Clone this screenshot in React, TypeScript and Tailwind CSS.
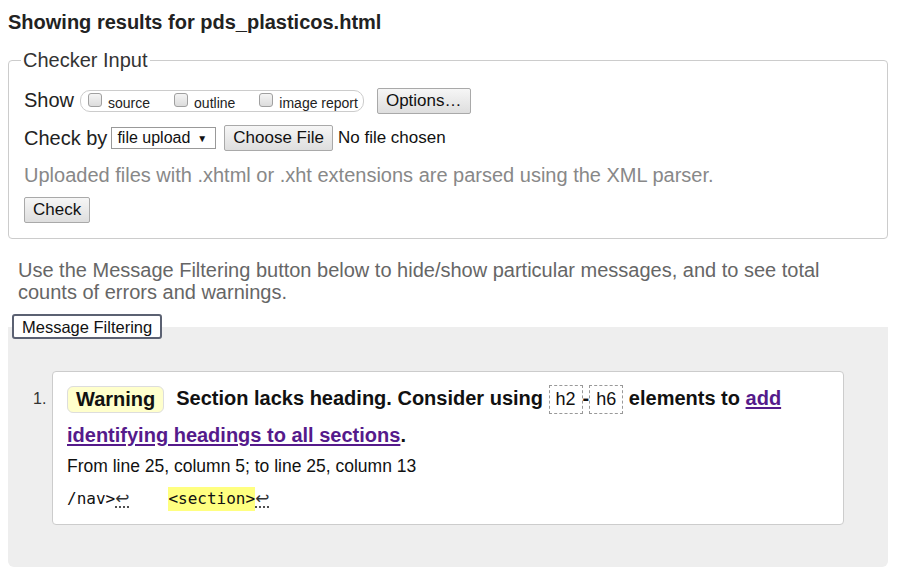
import React from "react";

function Box({ label }: { label: string }) {
  return (
    <label className="flex items-start gap-[6px]">
      <span className="mt-[1px] h-[14px] w-[14px] rounded-[3px] border border-[#a0a0a0] bg-gradient-to-b from-[#f4f4f4] to-[#dcdcdc]" />
      <span className="mt-[2px] text-[14px] leading-[18px] text-[#222]">{label}</span>
    </label>
  );
}

function Btn({ children, className = "" }: { children: React.ReactNode; className?: string }) {
  return (
    <button
      type="button"
      className={`flex h-[26px] items-center rounded-[2px] border border-[#a9a9a9] bg-gradient-to-b from-[#f6f6f6] to-[#dedede] px-[8px] text-[17px] text-[#111] ${className}`}
    >
      {children}
    </button>
  );
}

function Code({ children }: { children: React.ReactNode }) {
  return (
    <span className="inline-block h-[29px] border border-dashed border-[#999] px-[6px] align-middle text-[18px] font-normal leading-[27px]">
      {children}
    </span>
  );
}

function Ret() {
  return (
    <span className="inline-block h-[22px] font-['DejaVu_Sans',sans-serif] text-[17px] leading-[20px] text-[#333] underline decoration-dotted underline-offset-[3px]">
      ↩
    </span>
  );
}

export default function App() {
  return (
    <div className="h-[579px] w-[908px] overflow-hidden bg-white font-['Liberation_Sans',Arial,sans-serif] text-[#222]">
      <h2 className="px-2 pt-[11px] text-[20px] font-bold leading-[22px] text-[#222]">
        Showing results for pds_plasticos.html
      </h2>

      <fieldset className="ml-2 mr-[20px] mt-[16px] rounded-[4px] border border-[#ccc] px-[15px] pb-[15px]">
        <legend className="ml-[-3px] px-[2px] text-[20px] leading-[23px] text-[#333]">Checker Input</legend>

        <div className="mt-[14px] flex h-[30px] items-center">
          <span className="mb-[2px] text-[20px] text-[#222]">Show</span>
          <div className="ml-[6px] flex h-[22px] items-start gap-[24px] rounded-[10px] border border-[#ccc] pl-[7px] pr-[5px] pt-[1px]">
            <Box label="source" />
            <Box label="outline" />
            <Box label="image report" />
          </div>
          <Btn className="ml-[13px]">Options…</Btn>
        </div>

        <div className="mt-[7px] flex h-[30px] items-center">
          <span className="text-[20px] text-[#222]">Check by</span>
          <div className="ml-[4px] flex h-[22px] items-center border border-[#999] bg-white pl-[5px] pr-[8px] text-[16px] text-[#111]">
            file upload<span className="ml-[7px] text-[10px]">▼</span>
          </div>
          <Btn className="ml-[8px]">Choose File</Btn>
          <span className="ml-[5px] text-[17px] text-[#111]">No file chosen</span>
        </div>

        <div className="mt-[7px] flex h-[30px] items-center text-[20px] text-[#888]">
          Uploaded files with .xhtml or .xht extensions are parsed using the XML parser.
        </div>

        <div className="mt-[7px] flex">
          <Btn>Check</Btn>
        </div>
      </fieldset>

      <p className="ml-[18px] mr-[30px] mt-[20px] text-[20px] leading-[22px] text-[#666]">
        Use the Message Filtering button below to hide/show particular messages, and to see total counts of errors and warnings.
      </p>

      <button
        type="button"
        className="relative z-10 ml-[12px] mt-[11px] h-[25px] rounded-[3px] border-2 border-[#5b6172] bg-white px-[8px] text-[16.5px] leading-[20px] text-[#111]"
      >
        Message Filtering
      </button>

      <div className="ml-2 mr-[20px] -mt-[13px] rounded-b-[6px] bg-[#eee] pb-[42px] pl-[44px] pr-[44px] pt-[44px]">
        <ol className="list-none">
          <li className="relative rounded-[4px] border border-[#ccc] bg-white pb-[11px] pl-[14px] pr-4 pt-[8px]">
            <span className="absolute left-[-20px] top-[16px] text-[16px] leading-[22px] text-[#333]">1.</span>
            <p className="text-[20px] font-bold leading-[37px] text-[#111]">
              <span className="inline-block h-[27px] rounded-[6px] border border-[#ddd] bg-[#ffffcc] px-[8px] align-middle leading-[25px]">
                Warning
              </span>
              <span className="ml-[12px]">Section lacks heading. Consider using </span>
              <Code>h2</Code>-<Code>h6</Code> elements to{" "}
              <a className="text-[#551a8b] underline underline-offset-2">add identifying headings to all sections</a>.
            </p>
            <p className="flex h-[26px] items-center text-[17.5px] text-[#111]">
              From line 25, column 5; to line 25, column 13
            </p>
            <p className="mt-[5px] flex h-[28px] items-center font-['DejaVu_Sans_Mono','Liberation_Mono',monospace] text-[16px] text-[#111]">
              <span>/nav&gt;</span>
              <Ret />
              <span className="ml-[39px] bg-[#ffff80]">&lt;section&gt;</span>
              <Ret />
            </p>
          </li>
        </ol>
      </div>
    </div>
  );
}
